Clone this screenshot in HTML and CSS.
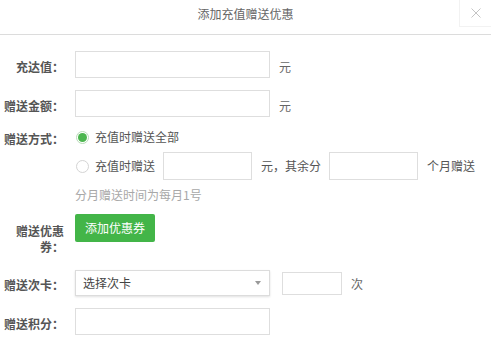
FILE: index.html
```html
<!DOCTYPE html>
<html>
<head>
  <meta charset="utf-8">
  <title>添加充值赠送优惠</title>
  <link rel="stylesheet" href="styles.css">
</head>
<body>

<div class="header">
  <span class="title">添加充值赠送优惠</span>
  <span class="close">
    <svg width="10" height="10" viewBox="0 0 10 10"><path d="M0.5 0.5 L9.5 9.5 M9.5 0.5 L0.5 9.5" stroke="#c4c4c4" stroke-width="1"/></svg>
  </span>
</div>

<div class="form">

  <div class="row">
    <span class="label">充达值：</span>
    <span class="input wide"></span>
    <span class="unit">元</span>
  </div>

  <div class="row">
    <span class="label">赠送金额：</span>
    <span class="input wide"></span>
    <span class="unit">元</span>
  </div>

  <div class="row top">
    <span class="label">赠送方式：</span>
    <div class="options">
      <div class="option">
        <span class="radio checked"></span>
        <span>充值时赠送全部</span>
      </div>
      <div class="option second">
        <span class="radio"></span>
        <span>充值时赠送</span>
        <span class="input short"></span>
        <span class="unit">元，其余分</span>
        <span class="input short"></span>
        <span class="unit">个月赠送</span>
      </div>
      <div class="hint">分月赠送时间为每月1号</div>
    </div>
  </div>

  <div class="row top coupon">
    <span class="label">赠送优惠券：</span>
    <span class="btn">添加优惠券</span>
  </div>

  <div class="row">
    <span class="label">赠送次卡：</span>
    <span class="select">选择次卡<span class="arrow"></span></span>
    <span class="input tiny"></span>
    <span class="unit">次</span>
  </div>

  <div class="row">
    <span class="label">赠送积分：</span>
    <span class="input wide"></span>
  </div>

</div>

</body>
</html>
```

FILE: styles.css
```css
body {
  margin: 0;
  background: #fff;
  font-family: "Noto Sans CJK SC", "Liberation Sans", sans-serif;
  font-size: 12px;
  color: #666;
}

.header {
  height: 34px;
  border-bottom: 1px solid #dcdcdc;
  display: flex;
  justify-content: center;
  align-items: center;
  position: relative;
}
.title {
  font-size: 12px;
  color: #666;
  margin-top: -7px;
}
.close {
  position: absolute;
  right: 0;
  top: 0;
  width: 31px;
  height: 26px;
  border-left: 1px solid #f2f2f2;
  border-bottom: 1px solid #f2f2f2;
  display: flex;
  justify-content: center;
  align-items: center;
}

.form {
  padding: 16px 0 0 4px;
}
.row {
  display: flex;
  align-items: center;
  margin-bottom: 12px;
}
.row.top {
  align-items: flex-start;
}
.label {
  width: 60px;
  margin-right: 11px;
  text-align: right;
  font-weight: bold;
  color: #555;
  line-height: 16px;
  padding-top: 4px;
}
.row.top .label {
  padding-top: 2px;
}
.row.coupon {
  margin-bottom: 15px;
}
.row.coupon .label {
  padding-top: 9px;
}

.input {
  display: block;
  box-sizing: border-box;
  border: 1px solid #dedede;
  height: 27px;
}
.input.wide { width: 195px; }
.input.short { width: 89px; height: 28px; margin-left: 8px; }
.input.tiny { width: 60px; height: 23px; margin-left: 12px; }
.unit {
  margin-left: 9px;
  padding-top: 3px;
}
.row .input.tiny + .unit {
  padding-top: 0;
}

.options {
  display: flex;
  flex-direction: column;
}
.option {
  display: flex;
  align-items: center;
  line-height: 16px;
  color: #555;
}
.option.second {
  margin-top: 7px;
}
.option.second .unit {
  padding-top: 0;
}
.radio {
  box-sizing: border-box;
  width: 13px;
  height: 13px;
  border: 1px solid #d4d4d4;
  border-radius: 50%;
  margin: 0 6px 0 1px;
  display: flex;
  justify-content: center;
  align-items: center;
}
.radio.checked {
  border-color: #b9dcb9;
}
.radio.checked::after {
  content: "";
  width: 9px;
  height: 9px;
  border-radius: 50%;
  background: #4cb64f;
}
.hint {
  margin-top: 8px;
  color: #a8a8a8;
  line-height: 14px;
}

.btn {
  display: block;
  width: 80px;
  height: 28px;
  line-height: 28px;
  text-align: center;
  background: #43b548;
  color: #fff;
  border-radius: 2px;
}

.select {
  position: relative;
  box-sizing: border-box;
  width: 195px;
  height: 26px;
  line-height: 24px;
  border: 1px solid #dcdcdc;
  box-shadow: 0 1px 2px rgba(0, 0, 0, 0.12);
  padding-left: 7px;
  color: #444;
}
.arrow {
  position: absolute;
  right: 8px;
  top: 10px;
  border-left: 3px solid transparent;
  border-right: 3px solid transparent;
  border-top: 4px solid #999;
}
```
